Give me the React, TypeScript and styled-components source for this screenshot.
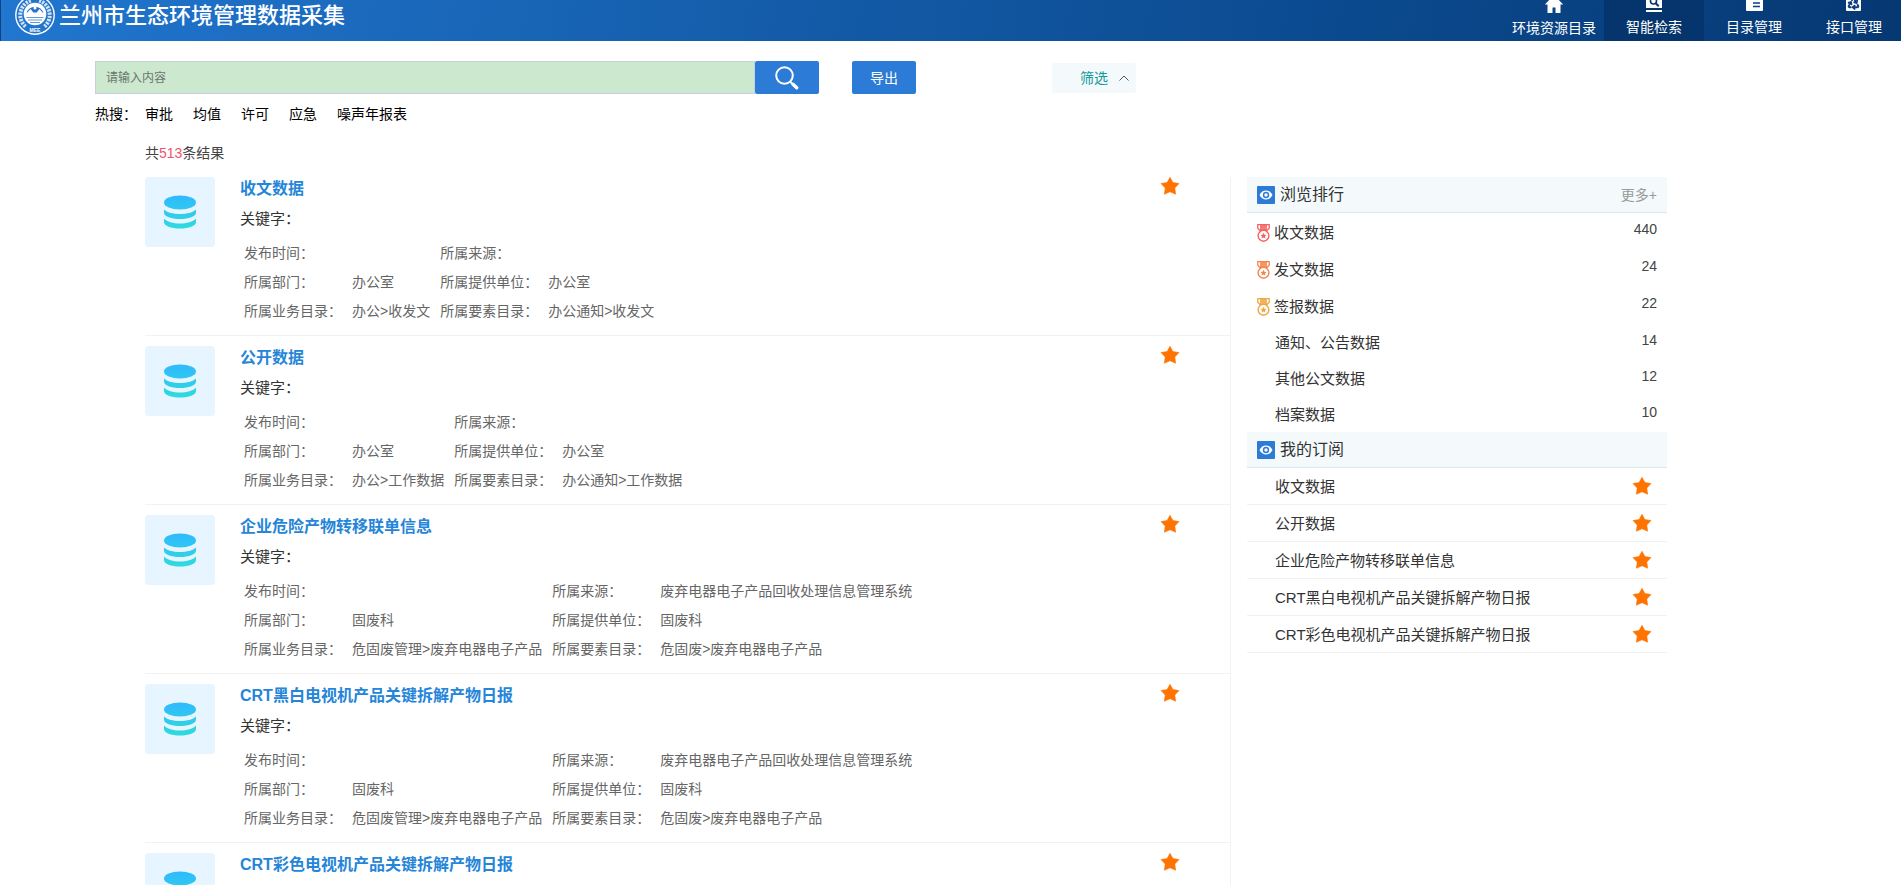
import React from 'react';
import styled, { createGlobalStyle, css } from 'styled-components';
import { Recycle } from 'lucide-react';

const GlobalStyle = createGlobalStyle`
  *, *::before, *::after { box-sizing: border-box; }
  html { scrollbar-width: none; }
  body {
    margin: 0;
    background: #fff;
    color: #333;
    font: 14px/20px "Liberation Sans", "Noto Sans CJK SC", sans-serif;
  }
  button, input { font: inherit; }
  a { color: inherit; text-decoration: none; }
  h1, h2, p, ul, ol { margin: 0; padding: 0; }
  ul, ol { list-style: none; }
  svg { display: block; flex: none; }
`;

const Page = styled.div`
  min-height: 100vh;
`;

const Header = styled.header`
  display: flex;
  justify-content: space-between;
  height: 41px;
  overflow: hidden;
  border-left: 1px solid #0b4385;
  background: linear-gradient(100deg, #2176cf 0%, #0b4a8f 70%, #063873 100%);
  color: #fff;
`;

const Brand = styled.div`
  display: flex;
  align-items: flex-end;
  gap: 4px;
  padding: 0 0 6px 14px;
`;

const BrandTitle = styled.h1`
  font-size: 22px;
  line-height: 32px;
  font-weight: 500;
  padding-bottom: 3px;
`;

const Nav = styled.nav`
  display: flex;
  margin-right: -3px;
`;

const NavLink = styled.a<{ $active?: boolean }>`
  display: flex;
  flex-direction: column;
  align-items: center;
  justify-content: flex-end;
  gap: 5px;
  width: 100px;
  padding-bottom: 4px;
  white-space: nowrap;
  ${(p) => p.$active && css`background: #05356c;`}
  &:first-child { padding-bottom: 3px; }
`;

const SearchArea = styled.section`
  padding: 20px 95px 0;
`;

const SearchBar = styled.form`
  display: flex;
  align-items: center;
`;

const SearchInput = styled.input`
  width: 660px;
  height: 33px;
  padding: 0 10px;
  border: 1px solid #c5d0dc;
  border-radius: 0;
  background: #cce8cf;
  font-size: 12px;
  outline: none;
  &::placeholder { color: #6b756d; opacity: 1; }
`;

const PrimaryButton = styled.button`
  display: flex;
  align-items: center;
  justify-content: center;
  width: 64px;
  height: 33px;
  padding: 0;
  border: 0;
  border-radius: 2px;
  background: #2b7bd7;
  color: #fff;
`;

const ExportButton = styled(PrimaryButton)`
  margin-left: 33px;
`;

const FilterButton = styled.button`
  display: flex;
  align-items: center;
  justify-content: flex-end;
  gap: 11px;
  width: 84px;
  height: 30px;
  margin-left: 136px;
  padding: 0 7px;
  border: 0;
  border-radius: 2px;
  background: #f4fafb;
  color: #11999a;
`;

const HotWords = styled.div`
  display: flex;
  gap: 20px;
  margin-top: 10px;
  color: #000;
`;

const HotLabel = styled.span`
  width: 30px;
  white-space: nowrap;
`;

const Columns = styled.main`
  display: flex;
  align-items: stretch;
  gap: 16px;
  padding: 0 234px 0 145px;
`;

const ResultCount = styled.p`
  padding: 19px 145px 14px;
  color: #444;
`;

const CountNumber = styled.span`
  color: #f4516c;
`;

const ResultList = styled.ul`
  display: flex;
  flex-direction: column;
  gap: 10px;
  flex: 1;
  min-width: 0;
  border-right: 1px solid #f2f2f2;
`;

const ResultItem = styled.li`
  display: flex;
  height: 159px;
  padding-right: 50px;
  border-bottom: 1px solid #f2f2f2;
`;

const Thumb = styled.div`
  display: flex;
  align-items: center;
  justify-content: center;
  flex: none;
  width: 70px;
  height: 70px;
  margin-right: 25px;
  border-radius: 4px;
  background: #e6f5ff;
`;

const ResultBody = styled.div`
  flex: 1;
  min-width: 0;
`;

const ResultTitle = styled.h2`
  color: #2585d8;
  font-size: 16px;
  line-height: 24px;
  font-weight: 700;
`;

const Keywords = styled.p`
  margin-top: 8px;
  font-size: 15px;
  line-height: 20px;
`;

const MetaTable = styled.table`
  margin-top: 9px;
  border-collapse: collapse;
  color: #666;
  line-height: 20px;
  white-space: nowrap;
  th, td {
    height: 29px;
    padding: 0 5px 0 4px;
    text-align: left;
    font-weight: 400;
  }
  th { width: 108px; min-width: 108px; }
  td { padding-right: 6px; }
`;

const StarButton = styled.button`
  flex: none;
  padding: 0;
  border: 0;
  background: none;
`;

const FavoriteButton = styled(StarButton)`
  align-self: flex-start;
`;

const Sidebar = styled.aside`
  flex: none;
  width: 420px;
`;

const PanelHeader = styled.div`
  display: flex;
  align-items: center;
  height: 36px;
  padding: 0 10px;
  border-bottom: 1px solid #d8ebeb;
  background: #f4fafb;
`;

const PanelTitle = styled.h2`
  flex: 1;
  margin-left: 5px;
  font-size: 16px;
  line-height: 22px;
  font-weight: 400;
`;

const MoreLink = styled.a`
  color: #999;
`;

const RankRow = styled.li<{ $medal: boolean }>`
  display: flex;
  align-items: center;
  height: ${(p) => (p.$medal ? 37 : 36)}px;
  padding: 0 10px 0 ${(p) => (p.$medal ? 10 : 28)}px;
  font-size: 15px;
`;

const RowName = styled.a`
  flex: 1;
  padding-top: 2px;
`;

const RankCount = styled.span`
  padding-bottom: 5px;
  color: #444;
  font-size: 14px;
`;

const MedalBox = styled.span`
  width: 17px;
  padding-top: 2px;
`;

const SubscriptionRow = styled.li`
  display: flex;
  align-items: center;
  height: 37px;
  padding: 0 15px 0 28px;
  border-bottom: 1px solid #f2f2f2;
  font-size: 15px;
`;

const StarIcon = () => (
  <svg width="20" height="18" viewBox="0 1 20 18">
    <path d="M10 1.300l2.900 5.200 6.100 1.100-4.200 4.400.8 6.200L10 15.700l-5.600 2.500.8-6.200L1 7.600l6.100-1.100z" fill="#ff7300" stroke="#ff7300" strokeWidth=".6" strokeLinejoin="round" />
  </svg>
);

const DatabaseIcon = () => (
  <svg width="32" height="34" viewBox="0 0 32 34">
    <defs>
      <linearGradient id="db" x1="0" y1="0" x2="0" y2="34" gradientUnits="userSpaceOnUse">
        <stop offset="0" stopColor="#2fb9ff" />
        <stop offset="1" stopColor="#2fdcdc" />
      </linearGradient>
    </defs>
    <g fill="url(#db)">
      <ellipse cx="16" cy="7.500" rx="16" ry="7" />
      <path d="M0 14.500c3 3 9 4.500 16 4.500s13-1.500 16-4.500v3c0 4-7 6.500-16 6.500S0 21.500 0 17.500z" />
      <path d="M0 23.500c3 3.500 9 5 16 5s13-1.500 16-5V27c0 4-7 6.500-16 6.500S0 31 0 27z" />
    </g>
  </svg>
);

const EyeIcon = () => (
  <svg width="18" height="18" viewBox="0 0 18 18">
    <rect width="18" height="18" rx="1" fill="#2b7bd7" />
    <path d="M2.500 9C4 6 6.300 4.600 9 4.600S14 6 15.500 9c-1.500 3-3.800 4.400-6.500 4.400S4 12 2.500 9z" fill="#fff" />
    <circle cx="9" cy="9" r="3.200" fill="#2b7bd7" />
    <circle cx="9" cy="9" r="1.700" fill="#fff" />
  </svg>
);

const MedalIcon = ({ color }: { color: string }) => (
  <svg width="13" height="18" viewBox="0 0 13 18">
    <path d="M.8.7h11.400v3.500L10 6.500H3L.8 4.200z" fill="#fff" stroke={color} strokeWidth="1.300" />
    <path d="M3 .5h7V7H3z" fill={color} fillOpacity=".85" />
    <circle cx="6.500" cy="11.800" r="5.400" fill="#fff" stroke={color} strokeWidth="1.400" />
    <path d="M6.500 8.800l.9 1.900 2.100.3L8 12.500l.4 2.100-1.900-1-1.900 1 .4-2.100L3.500 11l2.100-.3z" fill={color} />
  </svg>
);

const SearchIcon = () => (
  <svg width="24" height="24" viewBox="0 0 24 24" fill="none" stroke="#fff">
    <circle cx="9.500" cy="9.500" r="8.300" strokeWidth="2" />
    <path d="M15.500 16l1.500 1.500" strokeWidth="2" />
    <path d="M18 18.300l3.700 3.500" strokeWidth="3.400" strokeLinecap="round" />
  </svg>
);

const ChevronUpIcon = () => (
  <svg width="10" height="6" viewBox="0 0 10 6" fill="none" stroke="#555">
    <path d="M.5 5.500L5 1l4.500 4.500" />
  </svg>
);

const Emblem = () => (
  <svg width="40" height="40" viewBox="0 0 40 40" fill="none" stroke="#fff">
    <circle cx="20" cy="20" r="19.200" strokeWidth="1.400" />
    <path d="M10.500 31.500A15.200 15.200 0 0 1 16 5.500M29.500 31.500A15.200 15.200 0 0 0 24 5.500" strokeWidth="4" strokeDasharray="2.200 1.100" strokeOpacity=".8" />
    <circle cx="20" cy="19" r="11.300" fill="#fff" stroke="none" />
    <path d="M11.500 18.500A8.700 8.700 0 0 1 28.500 18.500L24.500 14l-2.800 3.500h-3.400L15.500 14z" fill="#2673c8" stroke="none" />
    <circle cx="20" cy="13" r="1.500" fill="#fff" stroke="none" />
    <path d="M11.500 22.500h17M13 25h14M15 27.500h10" stroke="#5d9be0" strokeWidth="1" />
    <text x="20" y="36.500" textAnchor="middle" fontSize="5" fontWeight="700" fill="#fff" stroke="none">MEE</text>
  </svg>
);

const HomeIcon = () => (
  <svg width="20" height="18" viewBox="0 0 20 18" fill="#fff">
    <path d="M10 0L.8 9.500h2.700V18h5v-5.500h3V18h5V9.500h2.700z" />
  </svg>
);

const SearchScreenIcon = () => (
  <svg width="18" height="18" viewBox="0 0 18 18">
    <path d="M1 0h16v14H1zM1 16h16v2H1z" fill="#fff" />
    <circle cx="8.500" cy="7" r="3" fill="none" stroke="#05356c" strokeWidth="1.600" />
    <path d="M10.700 9.300l3 3" stroke="#05356c" strokeWidth="2" />
  </svg>
);

const DocumentIcon = () => (
  <svg width="17" height="18" viewBox="0 0 17 18">
    <rect width="17" height="17" rx="1" fill="#fff" />
    <path d="M7 9h7M7 12.500h7" stroke="#0a3f80" strokeWidth="1.300" />
  </svg>
);

const RecycleIcon = () => (
  <svg width="16" height="18" viewBox="0 0 16 18">
    <rect width="15" height="17" rx="1" fill="#fff" />
    <Recycle x="1" y="3" width="13" height="13" color="#0a3f80" strokeWidth={3.5} />
  </svg>
);

const hotWords = ['审批', '均值', '许可', '应急', '噪声年报表'];

const wasteInfo = {
  source: '废弃电器电子产品回收处理信息管理系统',
  department: '固废科',
  provider: '固废科',
  business: '危固废管理>废弃电器电子产品',
  element: '危固废>废弃电器电子产品',
};

const results = [
  { title: '收文数据', source: '', department: '办公室', provider: '办公室', business: '办公>收发文', element: '办公通知>收发文' },
  { title: '公开数据', source: '', department: '办公室', provider: '办公室', business: '办公>工作数据', element: '办公通知>工作数据' },
  { title: '企业危险产物转移联单信息', ...wasteInfo },
  { title: 'CRT黑白电视机产品关键拆解产物日报', ...wasteInfo },
  { title: 'CRT彩色电视机产品关键拆解产物日报', ...wasteInfo },
];

const ranking = [
  { name: '收文数据', count: 440, medal: '#f56262' },
  { name: '发文数据', count: 24, medal: '#f5844c' },
  { name: '签报数据', count: 22, medal: '#efa742' },
  { name: '通知、公告数据', count: 14 },
  { name: '其他公文数据', count: 12 },
  { name: '档案数据', count: 10 },
];

export default function App() {
  return (
    <Page>
      <GlobalStyle />
      <Header>
        <Brand>
          <Emblem />
          <BrandTitle>兰州市生态环境管理数据采集</BrandTitle>
        </Brand>
        <Nav>
          <NavLink href="#catalog"><HomeIcon />环境资源目录</NavLink>
          <NavLink href="#search" $active><SearchScreenIcon />智能检索</NavLink>
          <NavLink href="#manage"><DocumentIcon />目录管理</NavLink>
          <NavLink href="#api"><RecycleIcon />接口管理</NavLink>
        </Nav>
      </Header>
      <SearchArea>
        <SearchBar onSubmit={(e) => e.preventDefault()}>
          <SearchInput type="text" aria-label="搜索" placeholder="请输入内容" />
          <PrimaryButton type="submit" aria-label="搜索"><SearchIcon /></PrimaryButton>
          <ExportButton type="button">导出</ExportButton>
          <FilterButton type="button">筛选<ChevronUpIcon /></FilterButton>
        </SearchBar>
        <HotWords>
          <HotLabel>热搜：</HotLabel>
          {hotWords.map((w) => <a href="#hot" key={w}>{w}</a>)}
        </HotWords>
      </SearchArea>
      <ResultCount>共<CountNumber>513</CountNumber>条结果</ResultCount>
      <Columns>
        <ResultList>
          {results.map((r) => (
            <ResultItem key={r.title}>
              <Thumb><DatabaseIcon /></Thumb>
              <ResultBody>
                <ResultTitle><a href="#detail">{r.title}</a></ResultTitle>
                <Keywords>关键字：</Keywords>
                <MetaTable>
                  <tbody>
                    <tr><th>发布时间：</th><td /><th>所属来源：</th><td>{r.source}</td></tr>
                    <tr><th>所属部门：</th><td>{r.department}</td><th>所属提供单位：</th><td>{r.provider}</td></tr>
                    <tr><th>所属业务目录：</th><td>{r.business}</td><th>所属要素目录：</th><td>{r.element}</td></tr>
                  </tbody>
                </MetaTable>
              </ResultBody>
              <FavoriteButton type="button" aria-label="取消收藏"><StarIcon /></FavoriteButton>
            </ResultItem>
          ))}
        </ResultList>
        <Sidebar>
          <PanelHeader>
            <EyeIcon />
            <PanelTitle>浏览排行</PanelTitle>
            <MoreLink href="#more">更多+</MoreLink>
          </PanelHeader>
          <ol>
            {ranking.map((r) => (
              <RankRow key={r.name} $medal={Boolean(r.medal)}>
                {r.medal && <MedalBox><MedalIcon color={r.medal} /></MedalBox>}
                <RowName href="#detail">{r.name}</RowName>
                <RankCount>{r.count}</RankCount>
              </RankRow>
            ))}
          </ol>
          <PanelHeader>
            <EyeIcon />
            <PanelTitle>我的订阅</PanelTitle>
          </PanelHeader>
          <ul>
            {results.map((r) => (
              <SubscriptionRow key={r.title}>
                <RowName href="#detail">{r.title}</RowName>
                <StarButton type="button" aria-label="取消订阅"><StarIcon /></StarButton>
              </SubscriptionRow>
            ))}
          </ul>
        </Sidebar>
      </Columns>
    </Page>
  );
}
